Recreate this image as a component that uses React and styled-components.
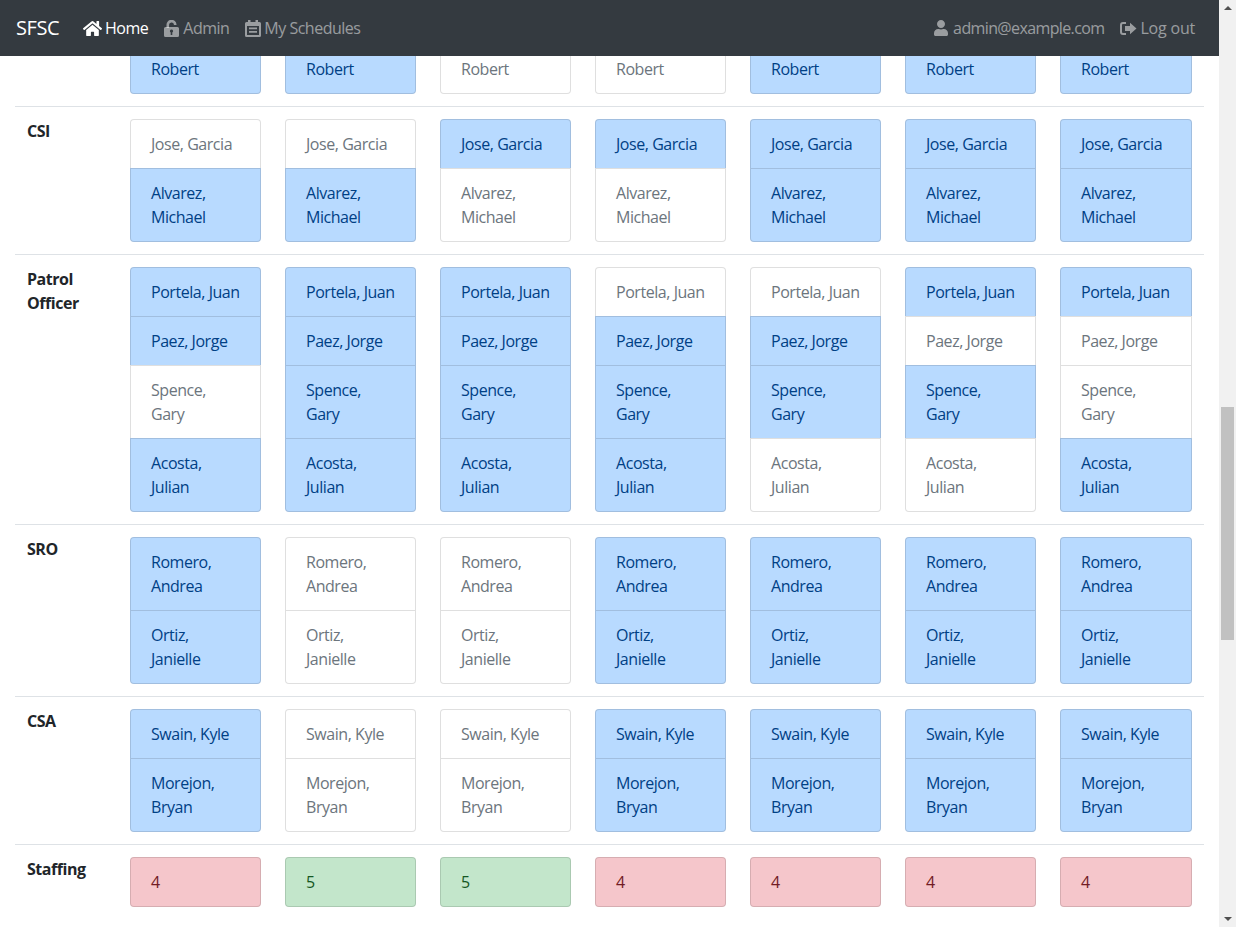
import React from "react";
import styled, { createGlobalStyle } from "styled-components";
import { FaHome, FaUser } from "react-icons/fa";

const GlobalStyle = createGlobalStyle`
  html, body {
    margin: 0;
    height: 100%;
    overflow: hidden;
    background: #fff;
  }
  body {
    font-family: "Open Sans", "Noto Sans", sans-serif;
    font-size: 16px;
    line-height: 24px;
    letter-spacing: -0.45px;
    color: #212529;
  }
`;

// on = scheduled (blue), off = white. Each shift row lists its people once.
const rows = [
  {
    label: "",
    people: [{ name: "Robert", days: [1, 1, 0, 0, 1, 1, 1] }],
  },
  {
    label: "CSI",
    people: [
      { name: "Jose, Garcia", days: [0, 0, 1, 1, 1, 1, 1] },
      { name: "Alvarez,\nMichael", days: [1, 1, 0, 0, 1, 1, 1] },
    ],
  },
  {
    label: "Patrol\nOfficer",
    people: [
      { name: "Portela, Juan", days: [1, 1, 1, 0, 0, 1, 1] },
      { name: "Paez, Jorge", days: [1, 1, 1, 1, 1, 0, 0] },
      { name: "Spence,\nGary", days: [0, 1, 1, 1, 1, 1, 0] },
      { name: "Acosta,\nJulian", days: [1, 1, 1, 1, 0, 0, 1] },
    ],
  },
  {
    label: "SRO",
    people: [
      { name: "Romero,\nAndrea", days: [1, 0, 0, 1, 1, 1, 1] },
      { name: "Ortiz,\nJanielle", days: [1, 0, 0, 1, 1, 1, 1] },
    ],
  },
  {
    label: "CSA",
    people: [
      { name: "Swain, Kyle", days: [1, 0, 0, 1, 1, 1, 1] },
      { name: "Morejon,\nBryan", days: [1, 0, 0, 1, 1, 1, 1] },
    ],
  },
];

const staffing = [4, 5, 5, 4, 4, 4, 4];
const dayIndexes = [0, 1, 2, 3, 4, 5, 6];

function UnlockIcon() {
  return (
    <NavSvg width="15" height="17" viewBox="0 0 15 17">
      <path
        fillRule="evenodd"
        d="M1.5 7h12A1.5 1.5 0 0 1 15 8.5v7a1.5 1.5 0 0 1-1.5 1.5h-12A1.5 1.5 0 0 1 0 15.500v-7A1.500 1.500 0 0 1 1.500 7zM7.500 9.500a1.600 1.600 0 0 0-.8 3V15h1.600v-2.500a1.600 1.600 0 0 0-.8-3z"
      />
      <path d="M2.500 8V5a5 5 0 0 1 10-.5V5h-2.600v-.4a2.400 2.400 0 0 0-4.800.4v3z" />
    </NavSvg>
  );
}

function CalendarIcon() {
  return (
    <NavSvg width="16" height="17" viewBox="0 0 16 17">
      <path
        fillRule="evenodd"
        d="M3 0h2.500v2h5V0H13v2h1.500A1.500 1.500 0 0 1 16 3.500v12a1.500 1.500 0 0 1-1.500 1.500h-13A1.500 1.500 0 0 1 0 15.500v-12A1.500 1.500 0 0 1 1.500 2H3zM2 6v9h12V6z"
      />
      <path d="M4 7.500h8v1.800H4zM4 11h8v1.800H4z" />
    </NavSvg>
  );
}

function LogOutIcon() {
  return (
    <NavSvg width="17" height="13" viewBox="0 0 17 13">
      <path d="M6 0H3a3 3 0 0 0-3 3v7a3 3 0 0 0 3 3h3v-2H3a1 1 0 0 1-1-1V3a1 1 0 0 1 1-1h3z" />
      <path d="M5 4h5V.8l6.500 5.700-6.500 5.700V9H5z" />
    </NavSvg>
  );
}

function App() {
  return (
    <Window>
      <GlobalStyle />
      <Page>
        <Navbar>
          <Brand>SFSC</Brand>
          <NavLink $active $gap={3}>
            <HomeGlyph />
            Home
          </NavLink>
          <NavLink>
            <UnlockIcon />
            Admin
          </NavLink>
          <NavLink $gap={3}>
            <CalendarIcon />
            My Schedules
          </NavLink>
          <NavRight>
            <NavLink $gap={5} $track={-0.62}>
              <UserGlyph />
              admin@example.com
            </NavLink>
            <NavLink $gap={3} $track={-0.2}>
              <LogOutIcon />
              Log out
            </NavLink>
          </NavRight>
        </Navbar>
        <Content>
          <Schedule>
            <colgroup>
              <LabelCol />
              {dayIndexes.slice(1).map((day) => (
                <DayCol key={day} />
              ))}
            </colgroup>
            <tbody>
              {rows.map((row) => (
                <tr key={row.label}>
                  <LabelCell>{row.label}</LabelCell>
                  {dayIndexes.map((day) => (
                    <DayCell key={day}>
                      <ShiftList>
                        {row.people.map((person) => (
                          <ShiftItem key={person.name} $on={person.days[day] === 1}>
                            {person.name}
                          </ShiftItem>
                        ))}
                      </ShiftList>
                    </DayCell>
                  ))}
                </tr>
              ))}
              <tr>
                <LabelCell>Staffing</LabelCell>
                {staffing.map((count, day) => (
                  <DayCell key={day}>
                    <CountBox $enough={count >= 5}>{count}</CountBox>
                  </DayCell>
                ))}
              </tr>
            </tbody>
          </Schedule>
        </Content>
      </Page>
      <Scrollbar>
        <ArrowUp />
        <Thumb />
        <ArrowDown />
      </Scrollbar>
    </Window>
  );
}

export default App;

const Window = styled.div`
  display: flex;
  height: 100vh;
  overflow: hidden;
`;

const Page = styled.div`
  flex: 1;
  min-width: 0;
  display: flex;
  flex-direction: column;
`;

const Navbar = styled.nav`
  flex: none;
  position: relative;
  z-index: 1;
  height: 56px;
  box-sizing: border-box;
  padding: 0 16px;
  display: flex;
  align-items: center;
  background: #343a40;
`;

const Brand = styled.span`
  font-size: 20px;
  line-height: 30px;
  color: #fff;
  margin-right: 16px;
`;

const NavLink = styled.span`
  display: flex;
  align-items: center;
  gap: ${(props) => props.$gap ?? 4}px;
  padding: 0 8px;
  white-space: nowrap;
  letter-spacing: ${(props) => props.$track ?? -0.5}px;
  color: ${(props) => (props.$active ? "#fff" : "rgba(255, 255, 255, 0.5)")};
`;

const NavSvg = styled.svg`
  flex: none;
  fill: currentColor;
`;

const HomeGlyph = styled(FaHome)`
  flex: none;
  width: 19px;
  height: 17px;
`;

const UserGlyph = styled(FaUser)`
  flex: none;
  width: 14px;
  height: 16px;
`;

const NavRight = styled.div`
  margin-left: auto;
  display: flex;
  align-items: center;
`;

const Content = styled.main`
  flex: 1;
  min-height: 0;
  overflow: hidden;
  padding: 0 15px;
`;

const Schedule = styled.table`
  width: 100%;
  margin-top: -25px;
  table-layout: fixed;
  border-collapse: collapse;
`;

const LabelCol = styled.col`
  width: 103px;
`;

const DayCol = styled.col`
  width: 155px;
`;

const LabelCell = styled.td`
  padding: 12px;
  vertical-align: top;
  border-top: 1px solid #dee2e6;
  font-weight: 700;
  white-space: pre-line;
`;

const DayCell = styled.td`
  padding: 12px;
  vertical-align: top;
  border-top: 1px solid #dee2e6;
`;

const ShiftList = styled.div`
  display: flex;
  flex-direction: column;
`;

const ShiftItem = styled.div`
  padding: 12px 20px;
  margin-bottom: -1px;
  border: 1px solid rgba(0, 0, 0, 0.125);
  white-space: pre-line;
  background: ${(props) => (props.$on ? "#b8daff" : "#fff")};
  color: ${(props) => (props.$on ? "#004085" : "#6c757d")};

  &:first-child {
    border-top-left-radius: 4px;
    border-top-right-radius: 4px;
  }
  &:last-child {
    margin-bottom: 0;
    border-bottom-left-radius: 4px;
    border-bottom-right-radius: 4px;
  }
`;

const CountBox = styled.div`
  padding: 12px 20px;
  border: 1px solid rgba(0, 0, 0, 0.125);
  border-radius: 4px;
  background: ${(props) => (props.$enough ? "#c3e6cb" : "#f5c6cb")};
  color: ${(props) => (props.$enough ? "#155724" : "#721c24")};
`;

const Scrollbar = styled.div`
  flex: none;
  width: 17px;
  display: flex;
  flex-direction: column;
  align-items: center;
  background: #f1f1f1;
`;

const ArrowUp = styled.div`
  margin-top: 6px;
  width: 0;
  height: 0;
  border-left: 4px solid transparent;
  border-right: 4px solid transparent;
  border-bottom: 4px solid #505050;
`;

const Thumb = styled.div`
  margin-top: 397px;
  width: 13px;
  height: 233px;
  background: #c1c1c1;
`;

const ArrowDown = styled.div`
  margin-top: auto;
  margin-bottom: 6px;
  width: 0;
  height: 0;
  border-left: 4px solid transparent;
  border-right: 4px solid transparent;
  border-top: 4px solid #505050;
`;
